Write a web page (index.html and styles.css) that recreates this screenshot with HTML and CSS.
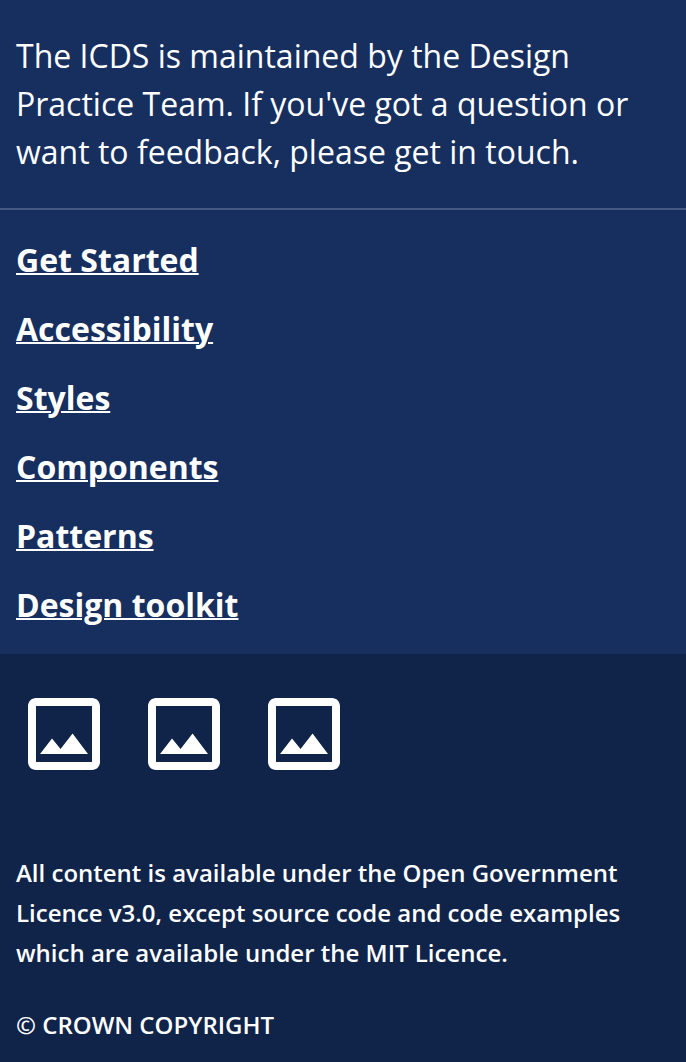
FILE: index.html
```
<!DOCTYPE html>
<html lang="en">
<head>
<meta charset="utf-8">
<title>Footer</title>
<link rel="stylesheet" href="styles.css">
</head>
<body>
<footer class="footer">
  <p class="description">The ICDS is maintained by the Design Practice Team. If you've got a question or want to feedback, please get in touch.</p>
  <nav class="links" aria-label="Footer">
    <a class="link" href="#">Get Started</a>
    <a class="link" href="#">Accessibility</a>
    <a class="link" href="#">Styles</a>
    <a class="link" href="#">Components</a>
    <a class="link" href="#">Patterns</a>
    <a class="link" href="#">Design toolkit</a>
  </nav>
  <div class="legal">
    <div class="logos">
      <a class="logo" href="#" aria-label="Logo one"><svg viewBox="0 0 24 24"><path d="M19 5v14H5V5h14m0-2H5c-1.100 0-2 .9-2 2v14c0 1.100.9 2 2 2h14c1.100 0 2-.9 2-2V5c0-1.100-.9-2-2-2zm-4.860 8.860l-3 3.870L9 13.140 6 17h12l-3.860-5.140z"/></svg></a>
      <a class="logo" href="#" aria-label="Logo two"><svg viewBox="0 0 24 24"><path d="M19 5v14H5V5h14m0-2H5c-1.100 0-2 .9-2 2v14c0 1.100.9 2 2 2h14c1.100 0 2-.9 2-2V5c0-1.100-.9-2-2-2zm-4.860 8.860l-3 3.870L9 13.140 6 17h12l-3.860-5.140z"/></svg></a>
      <a class="logo" href="#" aria-label="Logo three"><svg viewBox="0 0 24 24"><path d="M19 5v14H5V5h14m0-2H5c-1.100 0-2 .9-2 2v14c0 1.100.9 2 2 2h14c1.100 0 2-.9 2-2V5c0-1.100-.9-2-2-2zm-4.860 8.860l-3 3.870L9 13.140 6 17h12l-3.860-5.140z"/></svg></a>
    </div>
    <p class="caption">All content is available under the Open Government Licence v3.0, except source code and code examples which are available under the MIT Licence.</p>
    <p class="copyright">© CROWN COPYRIGHT</p>
  </div>
</footer>
</body>
</html>
```
FILE: styles.css
```
body {
  margin: 0;
  background: #10244a;
  color: #fff;
  font-family: "Open Sans", sans-serif;
}

.footer {
  background: #172f5f;
}

.description {
  margin: 0;
  padding: 32px 16px;
  border-bottom: 2px solid #455980;
  font-size: 32px;
  line-height: 48px;
}

.links {
  display: flex;
  flex-direction: column;
  align-items: flex-start;
  gap: 21px;
  padding: 26px 16px 25px;
}

.link {
  color: inherit;
  font-size: 32px;
  font-weight: 700;
  line-height: 48px;
  text-decoration-thickness: 2px;
}

.legal {
  padding: 32px 16px 16px;
  background: #10244a;
}

.logos {
  display: flex;
  gap: 24px;
  margin-bottom: 71px;
}

.logo {
  width: 96px;
  height: 96px;
}

.logo svg {
  display: block;
  fill: #fff;
}

.caption,
.copyright {
  margin: 0;
  font-size: 24px;
  font-weight: 600;
  line-height: 40px;
}

.copyright {
  margin-top: 32px;
}
```
